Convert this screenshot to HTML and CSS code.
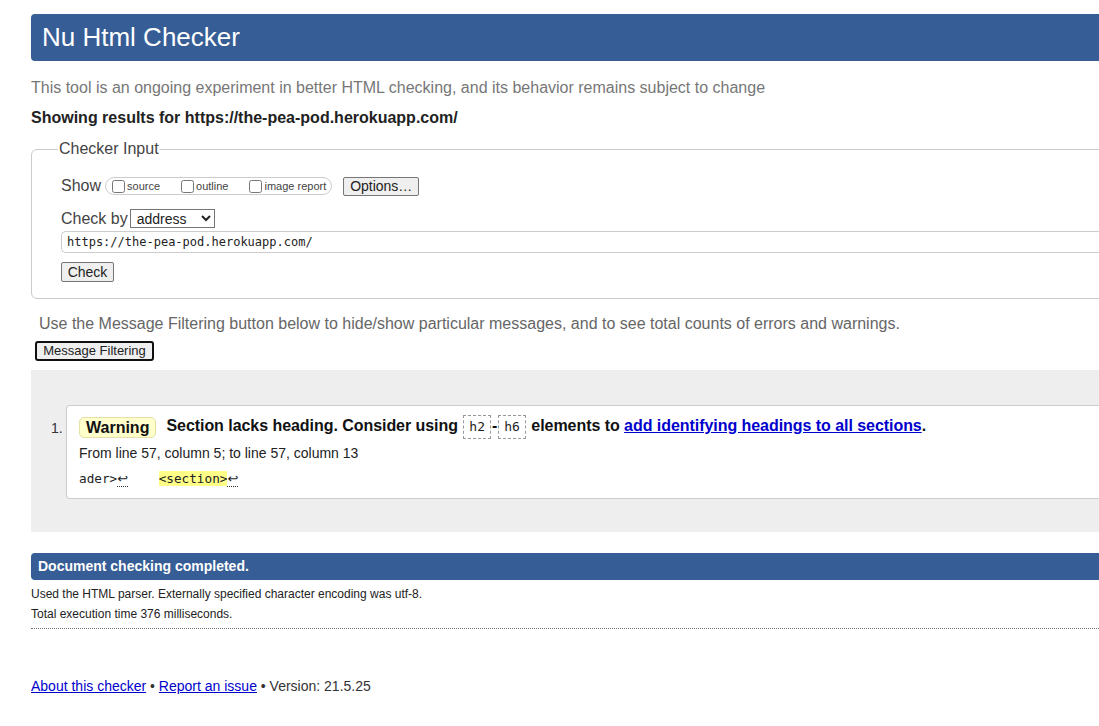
FILE: index.html
```html
<!DOCTYPE html>
<html lang="en">
<head>
<meta charset="utf-8">
<title>Showing results for https://the-pea-pod.herokuapp.com/ - Nu Html Checker</title>
<link rel="stylesheet" href="styles.css">
</head>
<body>
<div class="page">
  <h1 class="title">Nu Html Checker</h1>
  <p class="intro">This tool is an ongoing experiment in better HTML checking, and its behavior remains subject to change</p>
  <p class="showing">Showing results for https://the-pea-pod.herokuapp.com/</p>

  <fieldset class="checker">
    <legend class="legend">Checker Input</legend>
    <div class="row show-row">
      <span class="row-label">Show</span>
      <span class="show-group">
        <label class="opt"><input type="checkbox" class="cb">source</label>
        <label class="opt"><input type="checkbox" class="cb">outline</label>
        <label class="opt last"><input type="checkbox" class="cb">image report</label>
      </span>
      <button class="btn options">Options…</button>
    </div>
    <div class="row by-row">
      <span class="row-label">Check by</span>
      <select class="sel"><option>address</option></select>
    </div>
    <div class="url">https://the-pea-pod.herokuapp.com/</div>
    <button class="btn check">Check</button>
  </fieldset>

  <p class="filter-note">Use the Message Filtering button below to hide/show particular messages, and to see total counts of errors and warnings.</p>
  <button class="btn filter">Message Filtering</button>

  <div class="results">
    <ol class="list">
      <li class="item">
        <div class="msg">
          <span class="badge">Warning</span>
          <span class="text">Section lacks heading. Consider using <code class="tag">h2</code>-<code class="tag">h6</code> elements to <a class="link" href="#">add identifying headings to all sections</a>.</span>
        </div>
        <p class="loc">From line 57, column 5; to line 57, column 13</p>
        <p class="extract">ader&gt;<span class="lf">↩</span>    <b class="hl">&lt;section&gt;</b><span class="lf">↩</span></p>
      </li>
    </ol>
  </div>

  <h2 class="done">Document checking completed.</h2>
  <div class="details">
    <p class="detail">Used the HTML parser. Externally specified character encoding was utf-8.</p>
    <p class="detail">Total execution time 376 milliseconds.</p>
  </div>

  <p class="footer"><a class="flink" href="#">About this checker</a> • <a class="flink" href="#">Report an issue</a> • Version: 21.5.25</p>
</div>
</body>
</html>
```

FILE: styles.css
```css
html, body {
  margin: 0;
  padding: 0;
  overflow: hidden;
  background: #fff;
}
body {
  font-family: "Liberation Sans", Arial, sans-serif;
  color: #222;
}
.page {
  width: 1160px;
  padding: 14px 0 0 31px;
  display: flex;
  flex-direction: column;
  align-items: stretch;
}
.title {
  margin: 0;
  height: 47px;
  line-height: 47px;
  padding-left: 11px;
  font-size: 26px;
  font-weight: normal;
  color: #fff;
  background: #365d95;
  border-radius: 4px;
}
.intro {
  margin: 18px 0 0;
  font-size: 16px;
  line-height: 18px;
  color: #777;
}
.showing {
  margin: 12px 0 0;
  font-size: 16px;
  line-height: 18px;
  font-weight: bold;
  color: #222;
}
.checker {
  margin: 13px 0 0;
  padding: 0 0 16px 29px;
  border: 1px solid #ccc;
  border-radius: 6px;
  display: flex;
  flex-direction: column;
  align-items: flex-start;
}
.legend {
  margin-left: -3px;
  padding: 0 1px;
  font-size: 16px;
  line-height: 18px;
  color: #444;
}
.row {
  display: flex;
  align-items: center;
}
.row-label {
  font-size: 16px;
  line-height: 18px;
  color: #444;
}
.show-row {
  margin-top: 19px;
  height: 18px;
}
.show-group {
  display: flex;
  align-items: center;
  margin-left: 4px;
  height: 16px;
  padding: 0 5px 0 6px;
  border: 1px solid #ccc;
  border-radius: 9px;
}
.opt {
  display: flex;
  align-items: center;
  font-size: 11px;
  color: #444;
  margin-right: 21px;
}
.opt.last {
  margin-right: 0;
}
.cb {
  margin: 0 2px 0 0;
  width: 13px;
  height: 13px;
}
.btn {
  font-family: "Liberation Sans", Arial, sans-serif;
  font-size: 14px;
  line-height: 16px;
  color: #222;
  background: #efefef;
  border: 1px solid #767676;
  border-radius: 2px;
  padding: 1px 7px;
}
.options {
  margin-left: 11px;
  width: 76px;
  height: 19px;
  padding: 0;
}
.by-row {
  margin-top: 14px;
}
.sel {
  margin-left: 2px;
  width: 85px;
  height: 19px;
  font-family: "Liberation Sans", Arial, sans-serif;
  font-size: 14px;
  color: #222;
  border: 1px solid #767676;
  border-radius: 0;
  background: #fff;
  padding: 0 0 0 2px;
}
.url {
  margin-top: 3px;
  align-self: stretch;
  height: 20px;
  line-height: 20px;
  border: 1px solid #ccc;
  border-right: none;
  border-radius: 5px 0 0 5px;
  padding-left: 5px;
  font-family: "DejaVu Sans Mono", "Liberation Mono", monospace;
  font-size: 12px;
  color: #222;
}
.check {
  margin-top: 9px;
  width: 53px;
  height: 20px;
  padding: 0;
}
.filter-note {
  margin: 16px 0 0;
  padding-left: 8px;
  font-size: 16px;
  line-height: 18px;
  color: #666;
}
.filter {
  align-self: flex-start;
  margin: 8px 0 0 4px;
  width: 119px;
  height: 20px;
  padding: 0;
  font-size: 13px;
  border: 2px solid #101010;
  border-radius: 3px;
  background: #efefef;
}
.results {
  margin-top: 9px;
  background: #eee;
  padding: 35px 0 33px 0;
}
.list {
  margin: 0;
  padding: 0 0 0 35px;
  list-style: none;
}
.item {
  position: relative;
  background: #fff;
  border: 1px solid #ccc;
  border-right: none;
  border-radius: 4px 0 0 4px;
  padding: 10px 0 11px 12px;
}
.item::before {
  content: "1.";
  position: absolute;
  left: -16px;
  top: 14px;
  font-size: 14px;
  color: #333;
}
.msg {
  display: flex;
  align-items: center;
  height: 22px;
}
.badge {
  display: inline-block;
  height: 19px;
  line-height: 19px;
  padding: 0 6px;
  background: #ffc;
  border: 1px solid #e6e0a6;
  border-radius: 5px;
  font-weight: bold;
  font-size: 16px;
  color: #111;
}
.text {
  margin-left: 10px;
  font-weight: bold;
  font-size: 16px;
  letter-spacing: -0.05px;
  color: #111;
  white-space: nowrap;
}
.tag {
  display: inline-block;
  font-family: "DejaVu Sans Mono", "Liberation Mono", monospace;
  font-weight: normal;
  font-size: 13px;
  line-height: 22px;
  padding: 0 5px;
  border: 1px dashed #999;
  margin: 0 1px;
  color: #222;
  letter-spacing: 0;
}
.link {
  color: #00c;
  text-decoration: underline;
}
.loc {
  margin: 7px 0 0;
  font-size: 14px;
  line-height: 16px;
  color: #222;
}
.extract {
  margin: 10px 0 0;
  height: 16px;
  font-family: "DejaVu Sans Mono", "Liberation Mono", monospace;
  font-size: 12.7px;
  line-height: 16px;
  white-space: pre;
  color: #222;
}
.lf {
  font-family: "DejaVu Sans", sans-serif;
  font-size: 13px;
  line-height: 1;
  border-bottom: 1px dotted #333;
}
.hl {
  font-weight: normal;
  background: #ff8;
}
.done {
  margin: 21px 0 0;
  height: 27px;
  line-height: 27px;
  padding-left: 7px;
  font-size: 14px;
  font-weight: bold;
  color: #fff;
  background: #365d95;
  border-radius: 4px;
}
.details {
  padding: 4px 0 4px;
  border-bottom: 1px dotted #777;
}
.detail {
  margin: 0;
  font-size: 12px;
  line-height: 20px;
  color: #222;
}
.footer {
  margin: 49px 0 0;
  font-size: 14px;
  line-height: 16px;
  color: #333;
}
.flink {
  color: #00c;
  text-decoration: underline;
}
```
